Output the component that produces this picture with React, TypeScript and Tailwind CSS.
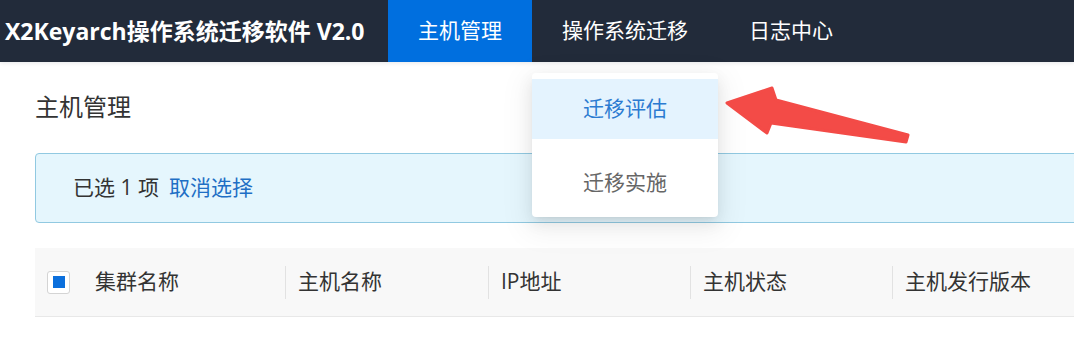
import React from "react";

const font = { fontFamily: '"Open Sans", "Noto Sans CJK SC", sans-serif' };

export default function App() {
  const cols = ["集群名称", "主机名称", "IP地址", "主机状态", "主机发行版本"];
  return (
    <div className="relative w-[1074px] h-[340px] overflow-hidden bg-white" style={font}>
      {/* Header */}
      <div className="relative z-10 flex h-[62px] bg-[#222b3a] text-white shadow-[0_1px_4px_rgba(0,21,41,0.10)]">
        <div className="flex w-[388px] items-center pl-[5px] text-[23px] font-bold leading-none">
          X2Keyarch操作系统迁移软件 V2.0
        </div>
        <div className="flex h-full">
          <div className="flex items-center bg-[#006fdf] px-[30px] text-[21px]">主机管理</div>
          <div className="flex items-center px-[30px] text-[21px]">操作系统迁移</div>
          <div className="flex items-center px-[31px] text-[21px]">日志中心</div>
        </div>
      </div>

      {/* Content */}
      <div className="pl-[35px] pt-[29px]">
        <div className="h-[32px] text-[24px] leading-[32px] text-[#333]">主机管理</div>
        <div className="mt-[30px] flex h-[70px] w-[1100px] items-center rounded-[4px] border border-[#91c9e1] bg-[#e5f6fd] pl-[37px] text-[21px]">
          <span className="text-[#333]">已选 1 项</span>
          <span className="ml-[10px] text-[#1f6fc5]">取消选择</span>
        </div>
        <div className="mt-[25px] grid h-[69px] w-[1100px] grid-cols-[47px_203px_203px_202px_202px_1fr] border-b border-[#e8e8e8] bg-[#f8f8f8] text-[21px] text-[#333]">
          <div className="flex items-center pl-[12px]">
            <div className="flex h-[23px] w-[23px] items-center justify-center rounded-[3px] border border-[#d4d4d4] bg-white">
              <div className="h-[12px] w-[12px] bg-[#0b6fdc]" />
            </div>
          </div>
          {cols.map((c, i) => (
            <div key={c} className="flex items-center">
              {i > 0 ? <div className="h-[33px] w-px bg-[#e2e2e2]" /> : <div className="w-px" />}
              <span className="pl-[12px]">{c}</span>
            </div>
          ))}
        </div>
      </div>

      {/* Dropdown */}
      <div className="absolute left-[532px] top-[73px] z-20 flex h-[144px] w-[186px] flex-col gap-[14px] rounded-[4px] bg-white pt-[6px] text-[21px] shadow-[0_3px_6px_-4px_rgba(0,0,0,0.12),0_6px_16px_0_rgba(0,0,0,0.08),0_9px_28px_8px_rgba(0,0,0,0.05)]">
        <div className="flex h-[60px] items-center justify-center bg-[#e4f3fe] text-[#2b7bd1]">迁移评估</div>
        <div className="flex h-[60px] items-center justify-center text-[#666]">迁移实施</div>
      </div>

      {/* Arrow */}
      <svg className="absolute left-0 top-0 z-30" width="1074" height="340" viewBox="0 0 1074 340">
        <polygon
          points="727,103 772,88 776,100 908,135 906,142 771,123 767,133"
          fill="#f34b47"
          stroke="#f34b47"
          strokeWidth="3"
          strokeLinejoin="round"
        />
      </svg>
    </div>
  );
}
